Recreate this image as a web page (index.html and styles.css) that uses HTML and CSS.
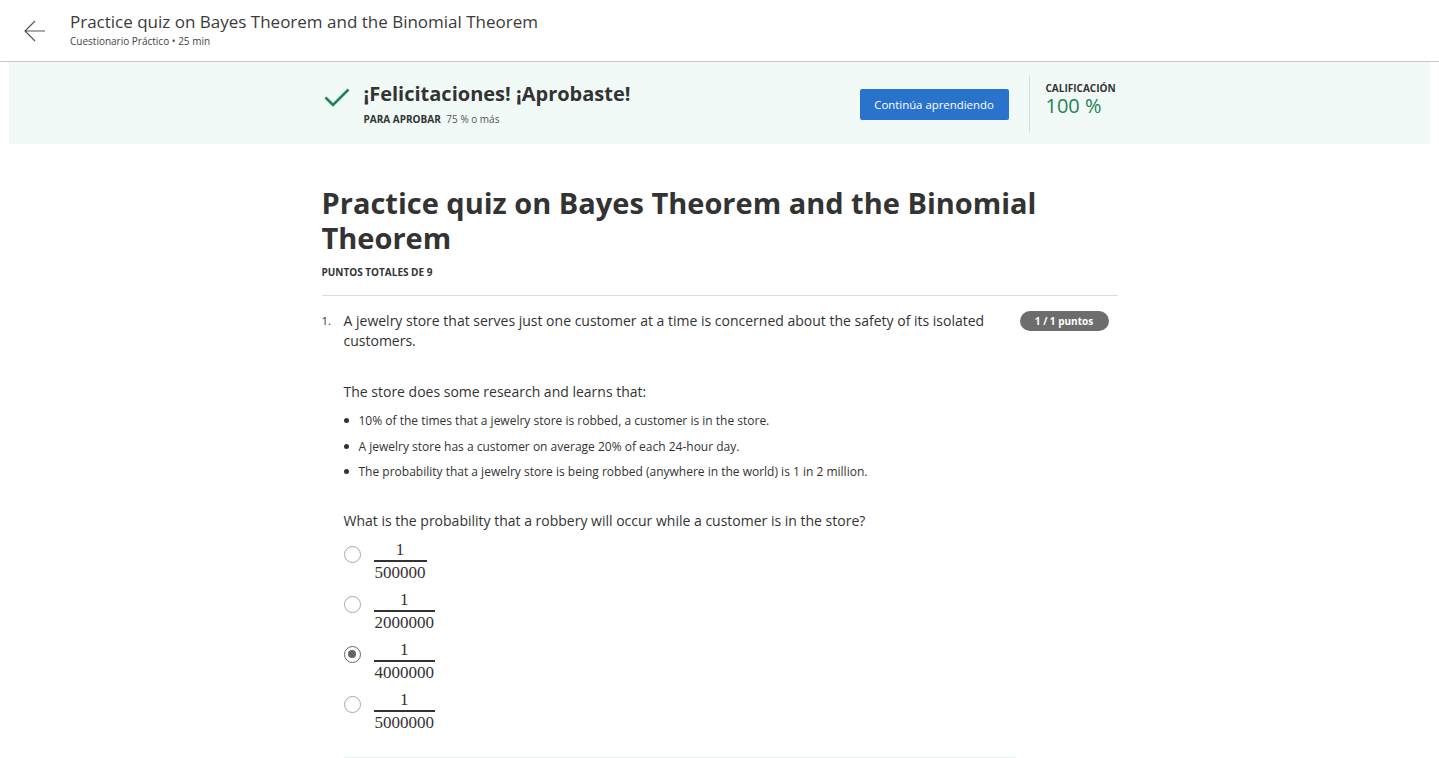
FILE: index.html
```html
<!DOCTYPE html>
<html lang="es">
<head>
<meta charset="utf-8">
<title>Practice quiz on Bayes Theorem and the Binomial Theorem</title>
<link rel="stylesheet" href="styles.css">
</head>
<body>
<header class="topbar">
  <button class="back" aria-label="Atrás">
    <svg width="22" height="22" viewBox="0 0 22 22" fill="none" stroke="#555" stroke-width="1.2">
      <path d="M21 11H1M11 1L1 11l10 10"/>
    </svg>
  </button>
  <div class="topbar-text">
    <div class="topbar-title">Practice quiz on Bayes Theorem and the Binomial Theorem</div>
    <div class="topbar-sub">Cuestionario Práctico • 25 min</div>
  </div>
</header>

<section class="banner">
  <div class="container banner-inner">
    <svg class="check" width="26" height="20" viewBox="0 0 26 20" fill="none" stroke="#1f8354" stroke-width="2.6">
      <path d="M1.5 9.5l7.5 7.5L24.5 1.5"/>
    </svg>
    <div class="banner-msg">
      <div class="banner-title">¡Felicitaciones! ¡Aprobaste!</div>
      <div class="banner-sub"><b>PARA APROBAR</b> 75 % o más</div>
    </div>
    <button class="btn-primary">Continúa aprendiendo</button>
    <div class="divider"></div>
    <div class="grade">
      <div class="grade-label">CALIFICACIÓN</div>
      <div class="grade-value">100 %</div>
    </div>
  </div>
</section>

<main class="container main">
  <h1 class="quiz-title">Practice quiz on Bayes Theorem and the Binomial Theorem</h1>
  <div class="total">PUNTOS TOTALES DE 9</div>
  <hr class="rule">

  <div class="question">
    <div class="q-num">1.</div>
    <div class="q-body">
      <div class="q-head">
        <p class="q-text">A jewelry store that serves just one customer at a time is concerned about the safety of its isolated customers.</p>
        <span class="badge">1 / 1 puntos</span>
      </div>
      <p class="q-para">The store does some research and learns that:</p>
      <ul class="facts">
        <li>10% of the times that a jewelry store is robbed, a customer is in the store.</li>
        <li>A jewelry store has a customer on average 20% of each 24-hour day.</li>
        <li>The probability that a jewelry store is being robbed (anywhere in the world) is 1 in 2 million.</li>
      </ul>
      <p class="q-ask">What is the probability that a robbery will occur while a customer is in the store?</p>
      <div class="options">
        <label class="option"><span class="radio"></span><span class="frac"><span class="num">1</span><span class="den">500000</span></span></label>
        <label class="option"><span class="radio"></span><span class="frac"><span class="num">1</span><span class="den">2000000</span></span></label>
        <label class="option"><span class="radio checked"></span><span class="frac"><span class="num">1</span><span class="den">4000000</span></span></label>
        <label class="option"><span class="radio"></span><span class="frac"><span class="num">1</span><span class="den">5000000</span></span></label>
      </div>
      <div class="feedback"></div>
    </div>
  </div>
</main>
</body>
</html>
```

FILE: styles.css
```css
* { box-sizing: border-box; }
html, body { margin: 0; padding: 0; background: #fff; }
body {
  font-family: "Open Sans", "Noto Sans", sans-serif;
  color: #333;
  overflow: hidden;
  height: 758px;
}
p { margin: 0; }

.topbar {
  display: flex;
  align-items: flex-start;
  height: 62px;
  border-bottom: 1px solid #c9c9c9;
  padding-left: 24px;
}
.back {
  background: none;
  border: 0;
  padding: 0;
  margin-top: 20px;
  width: 22px;
  height: 22px;
  cursor: pointer;
}
.back svg { display: block; }
.topbar-text { margin-left: 24px; padding-top: 10px; }
.topbar-title { font-size: 17px; line-height: 24px; color: #3b3b3b; }
.topbar-sub { font-size: 10px; line-height: 14px; color: #444; }

.banner {
  margin: 0 9px;
  height: 82px;
  background: #f1faf6;
}
.container { width: 796px; margin: 0 auto; }
.banner-inner { display: flex; align-items: center; height: 100%; }
.check { margin-left: 2px; margin-top: -10px; flex: none; }
.banner-msg { margin-left: 14px; flex: 1; margin-top: -1px; }
.banner-title { font-size: 20px; font-weight: 700; line-height: 28px; color: #333; }
.banner-sub { font-size: 10px; line-height: 14px; margin-top: 4px; color: #555; }
.banner-sub b { color: #333; margin-right: 3px; }
.btn-primary {
  background: #2a73cc;
  color: #fff;
  border: 0;
  border-radius: 2px;
  width: 149px;
  height: 31px;
  font-family: inherit;
  font-size: 11.4px;
  margin-top: 3px;
}
.divider { width: 1px; height: 57px; background: #dcdcdc; margin: 0 16px 0 20px; }
.grade { width: 72px; margin-top: -9px; }
.grade-label { font-size: 10px; font-weight: 700; line-height: 12px; color: #333; }
.grade-value { font-size: 20px; line-height: 20px; margin-top: 2px; color: #1f8354; }

.main { padding-top: 41px; }
.quiz-title {
  margin: 0;
  font-size: 29px;
  line-height: 35px;
  font-weight: 700;
  color: #333;
}
.total { font-size: 10px; font-weight: 700; margin-top: 10px; line-height: 14px; }
.rule { border: 0; border-top: 1px solid #dedede; margin: 16px 0 0; }

.question { display: flex; padding-top: 15px; }
.q-num { width: 22px; font-size: 11.5px; line-height: 20px; }
.q-body { flex: 1; }
.q-head { display: flex; align-items: flex-start; }
.q-text { width: 660px; font-size: 14px; line-height: 20px; }
.badge {
  margin-left: 16px;
  width: 89px;
  height: 20px;
  border-radius: 10px;
  background: #6d6d6d;
  color: #fff;
  font-size: 10px;
  font-weight: 700;
  line-height: 20px;
  text-align: center;
}
.q-para { font-size: 14px; line-height: 20px; margin-top: 31px; }
.facts { margin: 10px 0 0; padding: 0; list-style: none; font-size: 12px; line-height: 17px; }
.facts li { margin-bottom: 8.5px; padding-left: 15px; position: relative; }
.facts li::before {
  content: "";
  position: absolute;
  left: 0; top: 6px;
  width: 5px; height: 5px;
  border-radius: 50%;
  background: #333;
}
.q-ask { font-size: 14px; line-height: 20px; margin-top: 31px; }

.options { margin-top: 5px; }
.option { display: flex; align-items: center; height: 50px; }
.radio {
  width: 17px; height: 17px;
  border: 1px solid #a8a8a8;
  border-radius: 50%;
  flex: none;
  margin-top: -14px;
  position: relative;
  background: #fff;
}
.radio.checked { border: 1.5px solid #666; }
.radio.checked::after {
  content: "";
  position: absolute;
  left: 3px; top: 3px;
  width: 8px; height: 8px;
  border-radius: 50%;
  background: #666;
}
.frac {
  display: inline-flex;
  flex-direction: column;
  align-items: stretch;
  margin-left: 13px;
  font-family: "Liberation Serif", "Times New Roman", serif;
  font-size: 17px;
  color: #333;
}
.num, .den { text-align: center; line-height: 21px; padding: 0 1px; }
.den { border-top: 2px solid #333; }

.feedback {
  margin-top: 21px;
  width: 672px;
  height: 1px;
  background: #e3f1ec;
}
```
